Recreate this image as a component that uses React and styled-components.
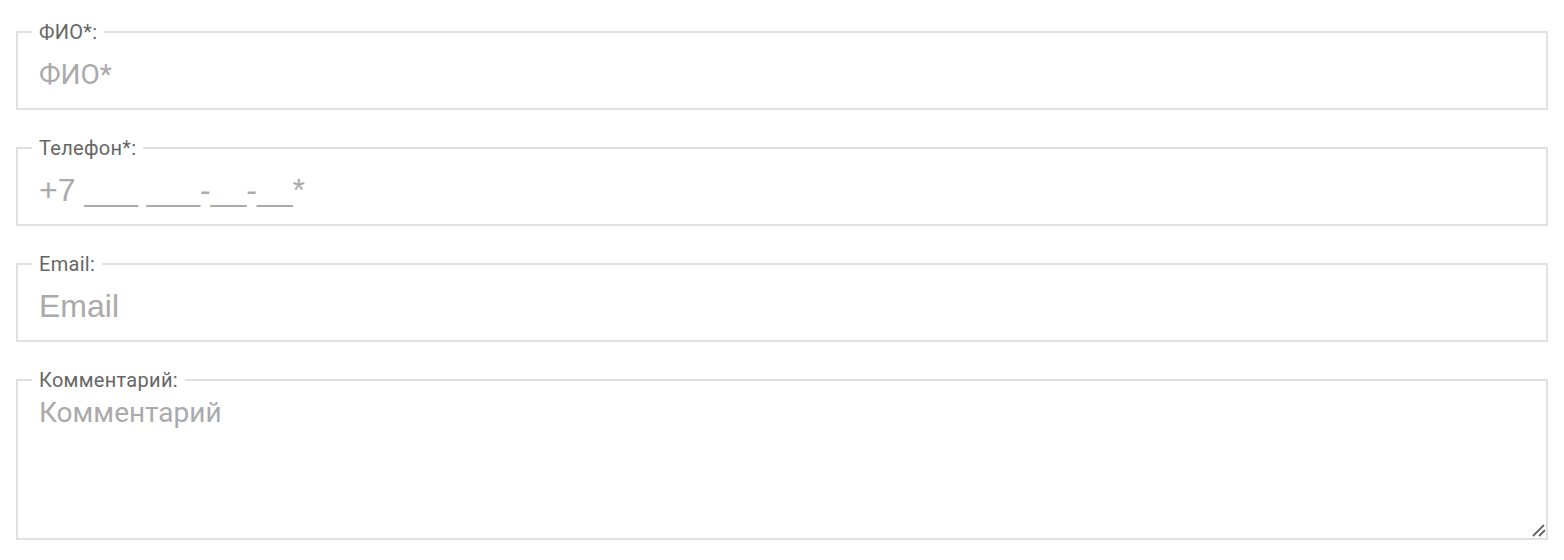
import React, { useState } from 'react';
import styled, { createGlobalStyle } from 'styled-components';

const GlobalStyle = createGlobalStyle`
  html, body {
    margin: 0;
    padding: 0;
    background: #fff;
  }
  body {
    font-family: Roboto, "Liberation Sans", sans-serif;
  }
`;

const Form = styled.form`
  display: flex;
  flex-direction: column;
  gap: 28px;
  padding: 22px 16px 0;
`;

const Fieldset = styled.fieldset`
  position: relative;
  margin: 0;
  padding: 0 2px 2px 0;
  border: 2px solid #e1e1e1;
  min-width: 0;
`;

const Legend = styled.legend`
  margin-left: 14px;
  padding: 0 7px;
  font-family: Roboto, "Liberation Sans", sans-serif;
  font-size: 20px;
  line-height: 20px;
  color: #666;
  letter-spacing: 0.3px;
`;

const Input = styled.input`
  display: block;
  width: 100%;
  box-sizing: border-box;
  height: 64px;
  padding: 0 21px;
  border: none;
  outline: none;
  background: transparent;
  font-family: ${(p) => (p.$roboto ? 'Roboto' : '"Liberation Sans"')}, sans-serif;
  font-size: ${(p) => (p.$roboto ? '28px' : '32px')};
  color: #333;

  &::placeholder {
    color: #aaa;
    opacity: 1;
  }
`;

const TextArea = styled.textarea`
  display: block;
  width: 100%;
  box-sizing: border-box;
  height: 146px;
  padding: 7px 21px;
  border: none;
  outline: none;
  background: transparent;
  font-family: Roboto, sans-serif;
  font-size: 28px;
  line-height: 32px;
  color: #333;
  resize: vertical;

  &::placeholder {
    color: #aaa;
    opacity: 1;
  }

  &::-webkit-resizer {
    background-color: transparent;
  }
`;

const Grip = styled.svg`
  position: absolute;
  right: 0;
  bottom: 0;
  width: 16px;
  height: 16px;
  pointer-events: none;
`;

const fields = [
  { name: 'fio', label: 'ФИО*:', placeholder: 'ФИО*', roboto: true },
  { name: 'phone', label: 'Телефон*:', placeholder: '+7 ___ ___-__-__*' },
  { name: 'email', label: 'Email:', placeholder: 'Email' },
];

const ContactForm = () => {
  const [values, setValues] = useState({ fio: '', phone: '', email: '', comment: '' });

  const handleChange = (name, value) => {
    setValues({ ...values, [name]: value });
  };

  return (
    <Form onSubmit={(e) => e.preventDefault()}>
      {fields.map((field) => (
        <Fieldset key={field.name}>
          <Legend>{field.label}</Legend>
          <Input
            type="text"
            $roboto={field.roboto}
            value={values[field.name]}
            onChange={(e) => handleChange(field.name, e.target.value)}
            placeholder={field.placeholder}
          />
        </Fieldset>
      ))}
      <Fieldset>
        <Legend>Комментарий:</Legend>
        <TextArea
          value={values.comment}
          onChange={(e) => handleChange('comment', e.target.value)}
          placeholder="Комментарий"
        />
        <Grip viewBox="0 0 16 16">
          <path d="M3 14 L14 3 M9 14 L15 8" stroke="#666" strokeWidth="1.8" />
        </Grip>
      </Fieldset>
    </Form>
  );
};

const App = () => (
  <>
    <GlobalStyle />
    <ContactForm />
  </>
);

export default App;
